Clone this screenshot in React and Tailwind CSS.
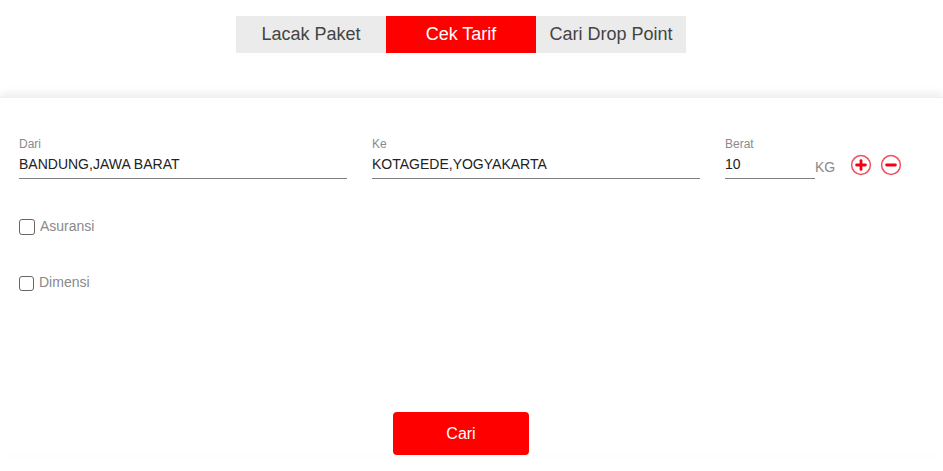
import React from 'react';

const tabs = ['Lacak Paket', 'Cek Tarif', 'Cari Drop Point'];

function Field({ label, value, className }) {
    return (
        <div className={className}>
            <div className="text-[12px] leading-[14px] text-[#8a8a8a]">{label}</div>
            <div className="h-[28px] border-b border-[#808080] pt-[3px] text-[14px] leading-[20px] text-[#222]">{value}</div>
        </div>
    );
}

function RoundIcon({ plus }) {
    return (
        <svg width="22" height="22" viewBox="0 0 22 22" fill="none">
            <circle cx="11" cy="11" r="9.4" stroke="#f0505f" strokeWidth="1.5" />
            <path d="M6.6 11h8.8" stroke="#f00014" strokeWidth="2.8" strokeLinecap="round" />
            {plus && <path d="M11 6.6v8.8" stroke="#f00014" strokeWidth="2.8" strokeLinecap="round" />}
        </svg>
    );
}

export default function App() {
    return (
        <div className="h-[471px] w-[943px] overflow-hidden bg-white font-['Liberation_Sans',Arial,sans-serif]">
            <div className="h-[97px] w-[922px] pt-[16px]">
                <div className="flex justify-center">
                    {tabs.map((tab, i) => (
                        <div
                            key={tab}
                            className={`flex h-[37px] w-[150px] items-center justify-center text-[18px] ${i === 1 ? 'bg-[#ff0000] text-white' : 'bg-[#ebebeb] text-[#444]'}`}
                        >
                            {tab}
                        </div>
                    ))}
                </div>
            </div>

            <div className="border-t border-[#f0f0f0] pl-[19px] pt-[39px] shadow-[0_-4px_8px_rgba(0,0,0,0.07)]">
                <div className="flex items-start">
                    <Field label="Dari" value="BANDUNG,JAWA BARAT" className="w-[328px]" />
                    <Field label="Ke" value="KOTAGEDE,YOGYAKARTA" className="ml-[25px] w-[328px]" />
                    <Field label="Berat" value="10" className="ml-[25px] w-[90px]" />
                    <span className="mt-[20px] w-[35px] text-[14px] leading-[20px] text-[#8a8a8a]">KG</span>
                    <div className="mt-[17px] flex gap-[8px]">
                        <RoundIcon plus />
                        <RoundIcon />
                    </div>
                </div>
                <div className="mt-[37px] flex items-start gap-[5px]">
                    <span className="mt-[3px] h-[16px] w-[16px] rounded-[3px] border border-[#666] bg-white"></span>
                    <span className="text-[14px] leading-[20px] text-[#8a8a8a]">Asuransi</span>
                </div>
                <div className="mt-[36px] flex items-start gap-[5px]">
                    <span className="mt-[4px] h-[15px] w-[15px] rounded-[3px] border border-[#666] bg-white"></span>
                    <span className="text-[14px] leading-[20px] text-[#8a8a8a]">Dimensi</span>
                </div>
                <div className="mt-[120px] flex w-[884px] justify-center">
                    <div className="flex h-[43px] w-[136px] items-center justify-center rounded-[4px] bg-[#ff0000] text-[16px] text-white">
                        Cari
                    </div>
                </div>
            </div>
        </div>
    );
}
